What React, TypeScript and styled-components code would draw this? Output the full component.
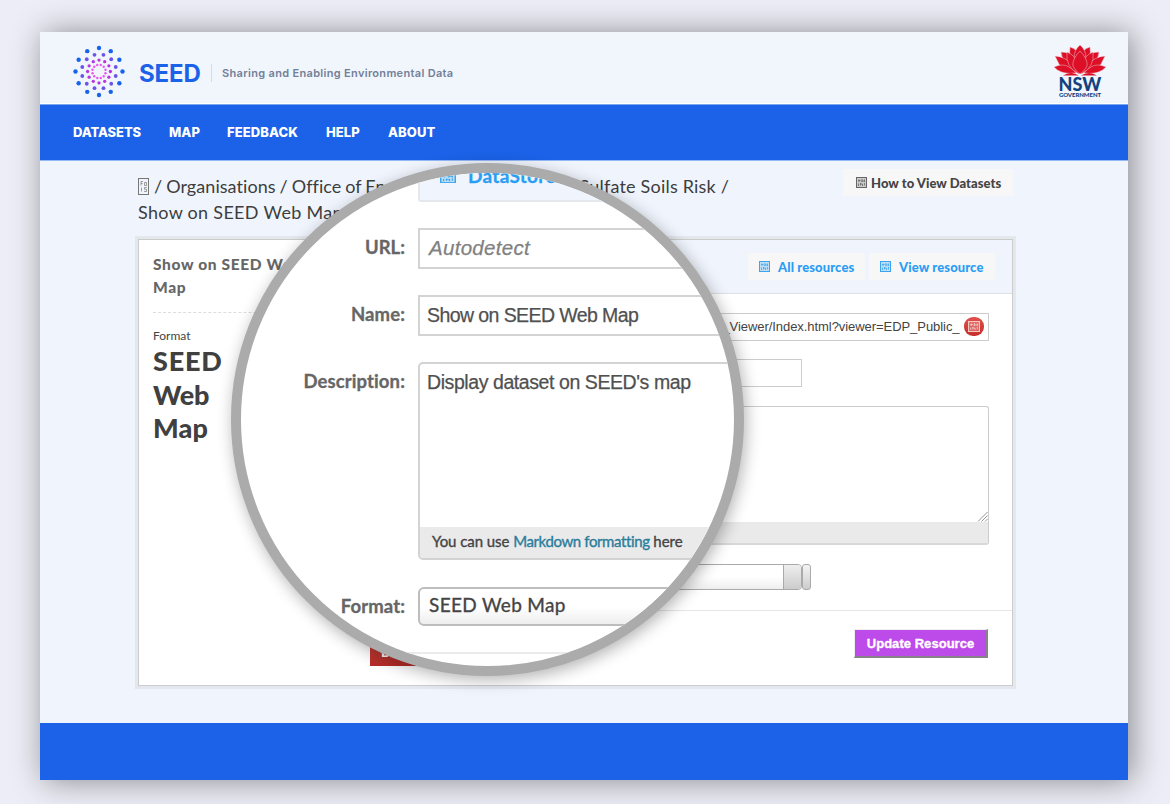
import React from 'react';
import styled, { createGlobalStyle } from 'styled-components';

const GlobalStyle = createGlobalStyle`
  * { box-sizing: border-box; }
  html, body { margin: 0; padding: 0; }
  body { background: #ecedf6; overflow: hidden; }
`;

const brand = 'Lato, sans-serif';
const field = '"Liberation Sans", Arial, sans-serif';

const Stage = styled.div`
  width: 1170px;
  height: 804px;
  padding: 32px 42px 24px 40px;
  font-family: ${brand};
  color: #444;
`;

const Window = styled.div`
  position: relative;
  width: 1088px;
  height: 748px;
  display: flex;
  flex-direction: column;
  background: #f0f5fd;
  box-shadow: 4px 1px 30px rgba(0, 0, 0, 0.42);
`;

const Header = styled.header`
  height: 72px;
  display: flex;
  align-items: center;
  justify-content: space-between;
  padding: 6px 22px 0 32px;
  background: #f1f6fd;
  border-bottom: 1px solid #fff;
`;

const Brand = styled.div`
  display: flex;
  align-items: center;
`;

const BrandName = styled.span`
  margin: 6px 0 0 13px;
  width: 62px;
  font: 700 24px/30px Inter, sans-serif;
  letter-spacing: -0.1px;
  color: #1b62e8;
`;

const Tagline = styled.span`
  margin: 4px 0 0 10px;
  padding-left: 10px;
  border-left: 1px solid #d5dae3;
  font: 600 11px/18px Inter, sans-serif;
  letter-spacing: 0.32px;
  color: #738098;
  white-space: nowrap;
`;

const Crest = styled.div`
  width: 52px;
  height: 58px;
  display: flex;
  flex-direction: column;
  align-items: center;
  padding-top: 3px;
  color: #14427f;
`;

const CrestName = styled.span`
  margin-top: 1px;
  font: 900 18px/14px Lato, sans-serif;
`;

const CrestSub = styled.span`
  font: 900 6px/7px Lato, sans-serif;
  letter-spacing: -0.05px;
`;

const Nav = styled.nav`
  height: 57px;
  display: flex;
  align-items: center;
  gap: 28px;
  padding: 0 33px 1px;
  background: #1b62e8;
  border-top: 1px solid #7ba4f1;
  border-bottom: 1px solid #94b7f6;
`;

const NavItem = styled.a<{ $w: number }>`
  width: ${p => p.$w}px;
  font: 800 13px/20px Inter, sans-serif;
  letter-spacing: ${p => (p.$w > 69 || p.$w < 69 && p.$w !== 68 ? 0.08 : -0.1)}px;
  color: #fff;
  white-space: nowrap;
`;

const Content = styled.main`
  flex: 1;
  padding: 8px 115px 0 98px;
`;

const Toolbar = styled.div`
  height: 70px;
  display: flex;
  justify-content: space-between;
  align-items: flex-start;
`;

const Breadcrumb = styled.div`
  padding-top: 4px;
  font-size: 18px;
  line-height: 26px;
  color: #3d3d3d;
  white-space: nowrap;
`;

const CrumbLine = styled.div`
  display: flex;
  align-items: center;
  height: 26px;
  letter-spacing: 0.3px;
`;

const CrumbStart = styled.span`
  width: 390px;
  padding-left: 5px;
  letter-spacing: 0.06px;
  word-spacing: -0.7px;
`;

const CrumbEnd = styled.span`
  letter-spacing: 0.2px;
`;

const SoftButton = styled.a<{ $blue?: boolean; $w: number; $gap?: number }>`
  display: flex;
  align-items: center;
  gap: ${p => p.$gap ?? 8}px;
  width: ${p => p.$w}px;
  height: 27px;
  padding-left: ${p => (p.$blue ? 11 : 13)}px;
  background: #f7f7f8;
  border-radius: 2px;
  font-size: 13px;
  font-weight: 900;
  letter-spacing: ${p => (p.$blue ? 0.12 : 0.04)}px;
  color: ${p => (p.$blue ? '#2a9df4' : '#444')};
  white-space: nowrap;
`;

const Card = styled.section`
  width: 875px;
  height: 447px;
  display: flex;
  background: #fff;
  border: 1px solid #ccc;
  box-shadow: 0 0 0 3px #e3e8ef;
`;

const Sidebar = styled.aside`
  width: 218px;
  padding: 13px 0 0 14px;
`;

const SideTitle = styled.h1`
  margin: 0;
  padding-bottom: 14px;
  border-bottom: 1px dashed #ddd;
  font-size: 15.5px;
  font-weight: 900;
  line-height: 22.5px;
  letter-spacing: 0.65px;
  color: #666;
  white-space: nowrap;
`;

const SideLabel = styled.div`
  margin-top: 15px;
  font-size: 12px;
  line-height: 16px;
`;

const SideValue = styled.div`
  width: 90px;
  font-size: 27px;
  font-weight: 900;
  line-height: 33.5px;
  color: #404040;
`;

const SideWord = styled.span<{ $spacing: number }>`
  display: block;
  letter-spacing: ${p => p.$spacing}px;
`;

const Primary = styled.div`
  flex: 1;
  display: flex;
  flex-direction: column;
`;

const PageHeader = styled.div`
  height: 54px;
  display: flex;
  justify-content: flex-end;
  gap: 4px;
  padding: 13px 17px 0 0;
  background: #f0f5fd;
  border-bottom: 1px solid #dde1e6;
`;

const Form = styled.div`
  height: 317px;
  display: flex;
  flex-direction: column;
  align-items: flex-start;
  padding: 19px 23.5px 0 150px;
  border-bottom: 1px solid #e6e6e6;
`;

const UrlInput = styled.div`
  width: 100%;
  height: 28px;
  display: flex;
  align-items: center;
  justify-content: flex-end;
  gap: 4px;
  padding: 0 4px 0 3px;
  border: 1px solid #ccc;
  font: 13px/26px ${field};
  letter-spacing: -0.06px;
  color: #444;
  white-space: nowrap;
`;

const RemoveBadge = styled.span`
  width: 20px;
  height: 19px;
  display: flex;
  align-items: center;
  justify-content: center;
  margin-bottom: 2px;
  border-radius: 9px;
  background: linear-gradient(#e0504c, #c5302c);
`;

const NameInput = styled.div`
  width: 295px;
  height: 28px;
  margin-top: 18px;
  border: 1px solid #ccc;
`;

const Editor = styled.div`
  width: 100%;
  height: 139px;
  margin-top: 19px;
  display: flex;
  flex-direction: column;
  border: 1px solid #ccc;
  border-bottom-width: 2px;
  border-bottom-color: #d8d8d8;
  border-radius: 3px;
  overflow: hidden;
`;

const EditorBody = styled.div`
  height: 115px;
  display: flex;
  align-items: flex-end;
  justify-content: flex-end;
`;

const EditorFoot = styled.div`
  flex: 1;
  background: #eaeaea;
`;

const SelectRow = styled.div`
  display: flex;
  margin-top: 19px;
  height: 26px;
`;

const SelectBox = styled.div`
  width: 295px;
  display: flex;
  justify-content: flex-end;
  border: 1px solid #aaa;
  border-radius: 4px;
  background: linear-gradient(#fff 50%, #eee);
  overflow: hidden;
`;

const SelectArrow = styled.div`
  width: 18px;
  border-left: 1px solid #aaa;
  background: linear-gradient(#eee, #ccc);
`;

const SelectStub = styled.div`
  width: 9px;
  border: 1px solid #aaa;
  border-radius: 3px;
  background: linear-gradient(#f4f4f4, #ccc);
`;

const Actions = styled.div`
  display: flex;
  justify-content: space-between;
  padding: 18px 24px 0 13px;
`;

const DangerButton = styled.button`
  height: 28px;
  width: 66px;
  margin-top: 9px;
  padding: 0 0 0 11px;
  border: 0;
  background: linear-gradient(#c8423c, #b52b27);
  color: #fff;
  text-align: left;
  font: 900 13px/28px ${brand};
`;

const UpdateButton = styled.button`
  width: 134px;
  height: 29px;
  padding: 1px 0 0;
  border: solid;
  border-width: 1px 2px 2px 1px;
  border-color: #eee #868288 #868288 #eee;
  background: #bd4bea;
  color: #fff;
  font: 700 13px/25px ${field};
  letter-spacing: 0.04px;
  -webkit-text-stroke: 0.35px #fff;
`;

const Footer = styled.footer`
  height: 57px;
  background: #1b62e8;
`;

const Lens = styled.div`
  position: absolute;
  left: 191px;
  top: 131px;
  width: 513px;
  height: 513px;
  border: 10px solid #ababab;
  border-radius: 50%;
  background: #fff;
  overflow: hidden;
  box-shadow: 2px 4px 16px rgba(0, 0, 0, 0.3);
`;

const LensForm = styled.div`
  width: 520px;
  display: flex;
  flex-direction: column;
`;

const LensRow = styled.div<{ $top: number }>`
  display: flex;
  align-items: flex-start;
  gap: 13px;
  margin-top: ${p => p.$top}px;
`;

const LensLabel = styled.label<{ $spacing?: number }>`
  width: 164px;
  flex: none;
  text-align: right;
  font-size: 18.5px;
  font-weight: 700;
  line-height: 38px;
  letter-spacing: ${p => p.$spacing ?? 0.1}px;
  -webkit-text-stroke: 0.3px #666;
  color: #666;
`;

const Upload = styled.div`
  width: 200px;
  height: 29px;
  margin-left: 177px;
  display: flex;
  align-items: flex-start;
  gap: 12px;
  padding-left: 20px;
  border: 2px solid #e4e7eb;
  border-top: 0;
  border-radius: 0 0 3px 3px;
  background: #f0f5fd;
  color: #2a9df4;
  font-size: 19px;
  font-weight: 700;
  line-height: 6px;
  letter-spacing: 0.3px;
  -webkit-text-stroke: 0.3px #2a9df4;
`;

const LensInput = styled.div<{ $spacing?: number; $italic?: boolean }>`
  flex: 1;
  height: 41px;
  padding-left: ${p => (p.$italic ? 9 : 7)}px;
  border: 2px solid #d3d3d3;
  font: ${p => (p.$italic ? 'italic 400 20.5px' : '400 19.5px')}/36px ${field};
  letter-spacing: ${p => p.$spacing ?? 0}px;
  -webkit-text-stroke: 0.25px;
  color: ${p => (p.$italic ? '#808080' : '#505050')};
  white-space: nowrap;
`;

const LensEditor = styled.div`
  flex: 1;
  height: 198px;
  display: flex;
  flex-direction: column;
  border: 2px solid #d3d3d3;
  border-radius: 5px;
  overflow: hidden;
`;

const LensText = styled.div`
  height: 163px;
  padding-left: 7px;
  font: 400 19.5px/36px ${field};
  letter-spacing: -0.42px;
  -webkit-text-stroke: 0.25px;
  color: #505050;
`;

const LensHint = styled.div`
  flex: 1;
  padding-left: 12px;
  background: #eaeaea;
  font-size: 15px;
  line-height: 29px;
  letter-spacing: -0.06px;
  -webkit-text-stroke: 0.35px;
  color: #444;
  white-space: nowrap;
`;

const HintLink = styled.a`
  letter-spacing: -0.39px;
  color: #2b7d9c;
`;

const LensSelect = styled.div`
  flex: 1;
  height: 39px;
  padding-left: 9px;
  border: 2px solid #bdbdbd;
  border-radius: 6px;
  background: linear-gradient(#fff 50%, #eee);
  font-size: 19px;
  line-height: 31px;
  letter-spacing: 0.32px;
  -webkit-text-stroke: 0.35px;
  color: #444;
`;

const LensRule = styled.div`
  height: 2px;
  margin: 26px 0 0 118px;
  background: #ebebeb;
`;

const rings = [
  { r: 23.5, d: 2.2, off: 0, c: '#1763e9' },
  { r: 17.3, d: 1.9, off: 15, c: '#6b55e8' },
  { r: 11.4, d: 1.65, off: 0, c: '#b637e2' },
  { r: 6.7, d: 1.2, off: 15, c: '#ea55f3' },
];

function SeedMark() {
  return (
    <svg width="54" height="54" viewBox="-27 -27.5 54 54">
      {rings.map(ring =>
        Array.from({ length: 12 }, (_, i) => {
          const a = ((i * 30 + ring.off) * Math.PI) / 180;
          return <circle key={`${ring.r}-${i}`} cx={ring.r * Math.sin(a)} cy={ring.r * Math.cos(a)} r={ring.d} fill={ring.c} />;
        }),
      )}
    </svg>
  );
}

function Waratah() {
  return (
    <svg width="52" height="31" viewBox="0 0 52 31" fill="#dc0f26" stroke="#f3c9d0" strokeWidth="0.5">
      <path d="M7 7 Q16 7 20 13 L22 27 L14 24 Q8 16 7 7Z" />
      <path d="M45 7 Q36 7 32 13 L30 27 L38 24 Q44 16 45 7Z" />
      <path d="M16 2 Q24 4 25 12 L22 25 Q14 14 16 2Z" />
      <path d="M36 2 Q28 4 27 12 L30 25 Q38 14 36 2Z" />
      <path d="M26 0 Q32 5 32 13 L26 22 L20 13 Q20 5 26 0Z" />
      <path d="M1 11 Q12 12 17 19 L22 28 Q8 27 5 19Z" />
      <path d="M51 11 Q40 12 35 19 L30 28 Q44 27 47 19Z" />
      <path d="M0 22 Q9 18 15 22 Q20 25 22 28 Q7 30 0 22Z" />
      <path d="M52 22 Q43 18 37 22 Q32 25 30 28 Q45 30 52 22Z" />
      <path d="M13 7 Q22 11 24 19 L25 29 Q11 22 13 7Z" />
      <path d="M39 7 Q30 11 28 19 L27 29 Q41 22 39 7Z" />
      <path d="M26 6 Q34 14 33 21 Q30 27 26 29 Q22 27 19 21 Q18 14 26 6Z" />
      <path d="M9 30.5 Q17 25.5 25 30.5Z M43 30.5 Q35 25.5 27 30.5Z" stroke="none" />
    </svg>
  );
}

function HomeGlyph() {
  return (
    <svg width="11" height="17" viewBox="0 0 11 17" fill="none" stroke="#777">
      <rect x="0.5" y="0.5" width="10" height="16" />
      <path d="M3 7.5V3.5H5 M3 5.5H4.6 M6.5 4.5H8.5V7.5H6.5Z M3.5 9.5V13.5 M8.8 9.5H6.5V11.3H8.5V13.5H6" strokeWidth="0.7" />
    </svg>
  );
}

function BoxGlyph({ color, width = 11, height = 11 }: { color: string; width?: number; height?: number }) {
  return (
    <svg width={width} height={height} viewBox="0 0 11 11" fill="none" stroke={color} preserveAspectRatio="none">
      <rect x="0.5" y="0.5" width="10" height="10" fill={color} fillOpacity="0.3" />
      <path d="M3 5V2.5 M2 3.5H4.5 M6 2V5 M8.5 2.5V5 M5 4H8.5 M2.5 6.5V9 M4.5 6V8.5 M4 7H6.5V9 M8.5 6V8.5" strokeWidth="0.8" />
    </svg>
  );
}

function ResizeGrip() {
  return (
    <svg width="11" height="11" viewBox="0 0 11 11" stroke="#888" strokeWidth="0.9">
      <path d="M1 10.5L10.5 1 M4.5 10.5L10.5 4.5 M8 10.5L10.5 8" />
    </svg>
  );
}

export default function App() {
  return (
    <Stage>
      <GlobalStyle />
      <Window>
        <Header>
          <Brand>
            <SeedMark />
            <BrandName>SEED</BrandName>
            <Tagline>Sharing and Enabling Environmental Data</Tagline>
          </Brand>
          <Crest>
            <Waratah />
            <CrestName>NSW</CrestName>
            <CrestSub>GOVERNMENT</CrestSub>
          </Crest>
        </Header>
        <Nav>
          <NavItem $w={68}>DATASETS</NavItem>
          <NavItem $w={30}>MAP</NavItem>
          <NavItem $w={71}>FEEDBACK</NavItem>
          <NavItem $w={34}>HELP</NavItem>
          <NavItem $w={50}>ABOUT</NavItem>
        </Nav>
        <Content>
          <Toolbar>
            <Breadcrumb>
              <CrumbLine>
                <HomeGlyph />
                <CrumbStart>/ Organisations / Office of Environment /</CrumbStart>
                <CrumbEnd>Acid Sulfate Soils Risk /</CrumbEnd>
              </CrumbLine>
              <CrumbLine>Show on SEED Web Map</CrumbLine>
            </Breadcrumb>
            <SoftButton $w={170} $gap={4}>
              <BoxGlyph color="#666" />
              How to View Datasets
            </SoftButton>
          </Toolbar>
          <Card>
            <Sidebar>
              <SideTitle>
                Show on SEED Web
                <br />
                Map
              </SideTitle>
              <SideLabel>Format</SideLabel>
              <SideValue>
                <SideWord $spacing={0.8}>SEED</SideWord>
                <SideWord $spacing={-0.1}>Web</SideWord>
                <SideWord $spacing={0.2}>Map</SideWord>
              </SideValue>
            </Sidebar>
            <Primary>
              <PageHeader>
                <SoftButton $blue $w={117}>
                  <BoxGlyph color="#3da5ee" />
                  All resources
                </SoftButton>
                <SoftButton $blue $w={126}>
                  <BoxGlyph color="#3da5ee" />
                  View resource
                </SoftButton>
              </PageHeader>
              <Form>
                <UrlInput>
                  _Viewer/Index.html?viewer=EDP_Public_
                  <RemoveBadge>
                    <BoxGlyph color="#f8c9c4" width={12} />
                  </RemoveBadge>
                </UrlInput>
                <NameInput />
                <Editor>
                  <EditorBody>
                    <ResizeGrip />
                  </EditorBody>
                  <EditorFoot />
                </Editor>
                <SelectRow>
                  <SelectBox>
                    <SelectArrow />
                  </SelectBox>
                  <SelectStub />
                </SelectRow>
              </Form>
              <Actions>
                <DangerButton>Delete</DangerButton>
                <UpdateButton>Update Resource</UpdateButton>
              </Actions>
            </Primary>
          </Card>
        </Content>
        <Footer />
        <Lens>
          <LensForm>
            <Upload>
              <BoxGlyph color="#3da5ee" width={16} height={10} />
              DataStore
            </Upload>
            <LensRow $top={26}>
              <LensLabel $spacing={0}>URL:</LensLabel>
              <LensInput $italic $spacing={0.3}>Autodetect</LensInput>
            </LensRow>
            <LensRow $top={26}>
              <LensLabel>Name:</LensLabel>
              <LensInput $spacing={-0.58}>Show on SEED Web Map</LensInput>
            </LensRow>
            <LensRow $top={26}>
              <LensLabel>Description:</LensLabel>
              <LensEditor>
                <LensText>Display dataset on SEED's map</LensText>
                <LensHint>
                  You can use <HintLink>Markdown formatting</HintLink> here
                </LensHint>
              </LensEditor>
            </LensRow>
            <LensRow $top={27}>
              <LensLabel>Format:</LensLabel>
              <LensSelect>SEED Web Map</LensSelect>
            </LensRow>
            <LensRule />
          </LensForm>
        </Lens>
      </Window>
    </Stage>
  );
}
